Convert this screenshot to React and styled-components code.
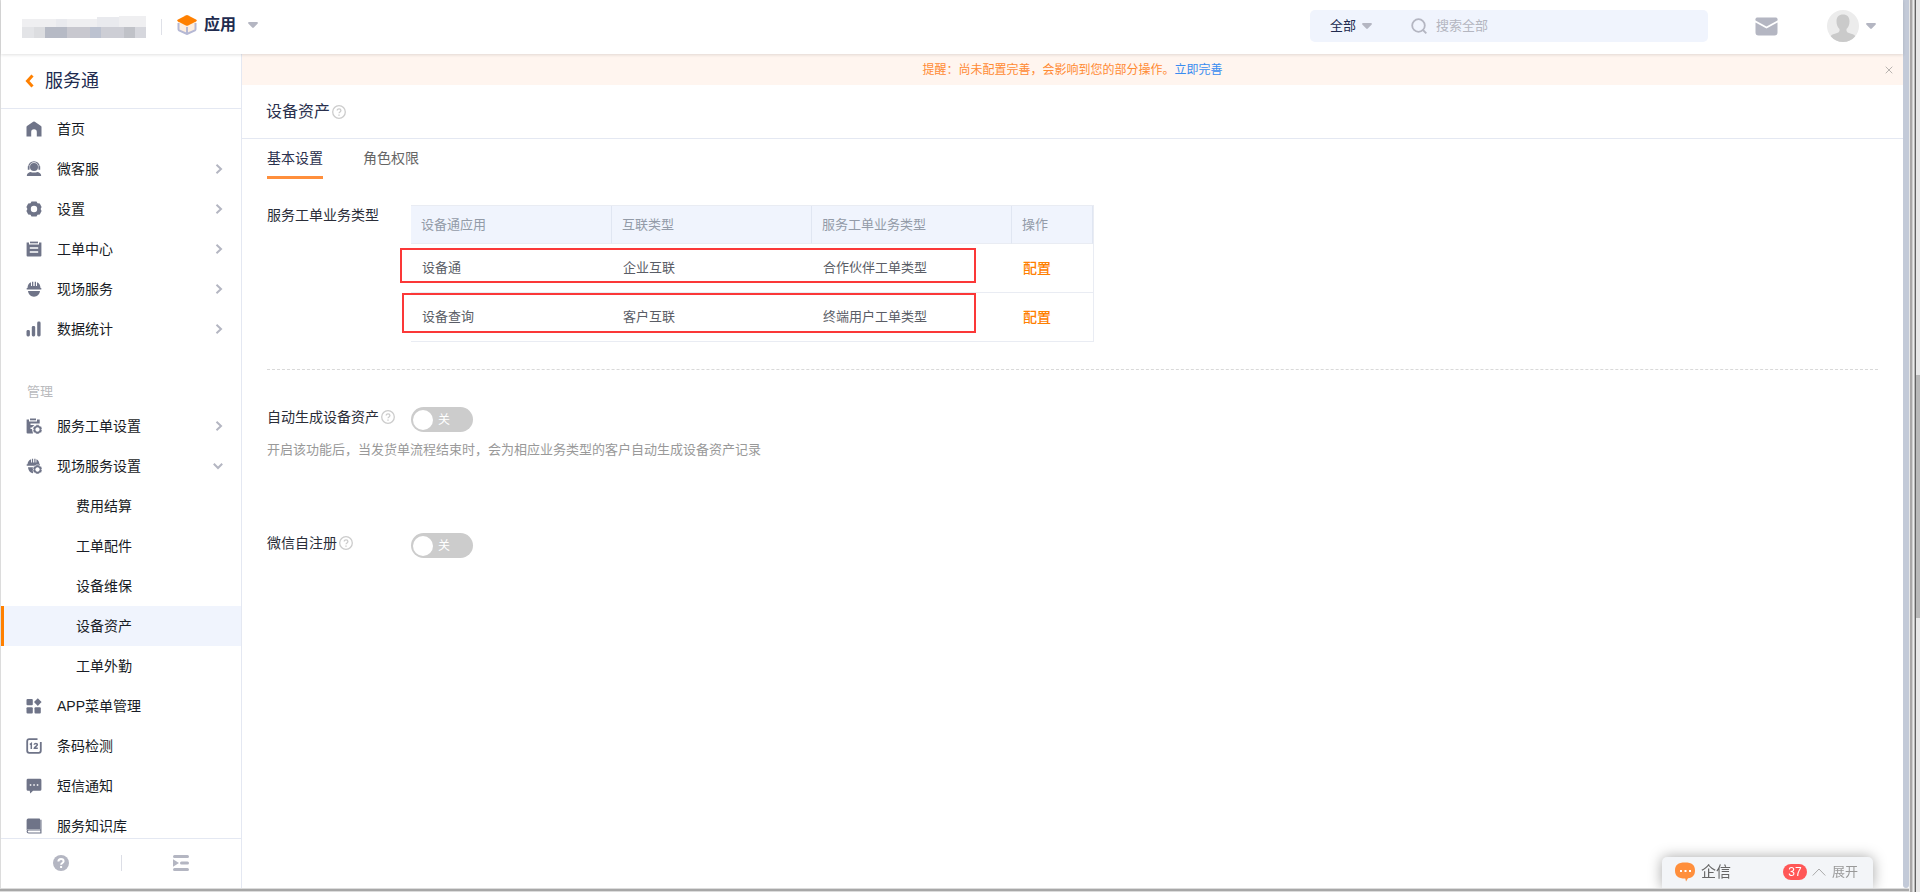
import React, { useState } from "react";
import styled, { createGlobalStyle } from "styled-components";

const FONT = '"Liberation Sans", "Noto Sans CJK SC", sans-serif';
const ORANGE = "#ff8000";
const LINE = "#e4e8f2";
const SLATE = "#6f7488";
const MUTED = "#b4b6c2";

const GlobalStyle = createGlobalStyle`
  * { box-sizing: border-box; }
  body { margin: 0; background: #fff; color: #181c25; font: 14px/20px ${FONT}; }
  button, input, select { font: inherit; color: inherit; margin: 0; padding: 0; border: 0; background: none; outline: none; }
  button { cursor: pointer; }
  a { color: inherit; text-decoration: none; }
  ul { list-style: none; margin: 0; padding: 0; }
  svg { display: block; flex: none; }
`;

/* ---------- window frame ---------- */

const Window = styled.div`
  display: flex;
  height: 100vh;
  overflow: hidden;
`;

const Frame = styled.div`
  flex: 1;
  min-width: 0;
  display: flex;
  flex-direction: column;
`;

const Viewport = styled.div`
  flex: 1;
  min-height: 0;
  display: flex;
`;

const AppShell = styled.div`
  flex: 1;
  min-width: 0;
  display: flex;
  flex-direction: column;
  border-left: 1px solid #dcdcdc;
`;

const InnerScroll = styled.div`
  width: 6px;
  background: #c3cad8;
  border-radius: 0 0 3px 3px;
`;

const FrameBottom = styled.div`
  height: 4px;
  background: #a8a8a8;
  border-top: 1px solid #dcdcdc;
  border-bottom: 1px solid #dcdcdc;
`;

const FrameRight = styled.div`
  width: 7px;
  background: linear-gradient(to right, #e6e6e6 0 1px, #a9a7a7 1px 3px, #cfcfcf 3px 4px, #ececec 4px 5px, #b8b8b8 5px 6px, #626262 6px 7px);
`;

const OuterScroll = styled.div`
  width: 4px;
  display: grid;
  grid-template-rows: 375fr 243fr 274fr;
  background: #e8e8e8;
`;

const OuterThumb = styled.div`
  grid-row: 2;
  background: #b8b8b8;
`;

/* ---------- header ---------- */

const Header = styled.header`
  position: relative;
  z-index: 2;
  height: 54px;
  display: flex;
  align-items: center;
  padding: 0 27px 0 21px;
  background: #fff;
  box-shadow: 0 1px 3px rgba(0, 0, 0, 0.12);
`;

const HeaderSplit = styled.i`
  width: 1px;
  height: 16px;
  margin: 0 15px;
  background: #dfe1e8;
`;

const AppSwitch = styled.button`
  display: flex;
  align-items: center;
  margin-bottom: 4px;
  font-size: 16px;
  line-height: 24px;
  font-weight: 700;
  color: #212b4f;
  svg:first-child { margin-right: 7px; }
  svg:last-child { margin-left: 12px; }
`;

const SearchBar = styled.form`
  width: 398px;
  height: 32px;
  margin: 0 47px 2px auto;
  padding-left: 20px;
  display: flex;
  align-items: center;
  border-radius: 5px;
  background: #f0f4fd;
  font-size: 13px;
`;

const Scope = styled.label`
  display: flex;
  align-items: center;
  gap: 6px;
  margin-right: 39px;
  select { appearance: none; width: 26px; color: #212b4f; }
`;

const SearchInput = styled.input`
  flex: 1;
  margin-left: 9px;
  &::placeholder { color: #b4b6c0; opacity: 1; }
`;

const MailButton = styled.button`
  margin: 0 49px 2px 0;
`;

const UserButton = styled.button`
  display: flex;
  align-items: center;
  gap: 7px;
  margin-bottom: 2px;
`;

/* ---------- sidebar ---------- */

const Body = styled.div`
  flex: 1;
  min-height: 0;
  display: flex;
`;

const Sidebar = styled.aside`
  width: 241px;
  display: flex;
  flex-direction: column;
  border-right: 1px solid ${LINE};
`;

const SideTitle = styled.a`
  height: 55px;
  display: flex;
  align-items: center;
  gap: 11px;
  padding-left: 24px;
  border-bottom: 1px solid ${LINE};
  font-size: 18px;
  line-height: 26px;
  color: #212b4f;
`;

const Nav = styled.nav`
  flex: 1;
  min-height: 0;
  overflow: hidden;
`;

const NavLink = styled.a`
  height: 40px;
  display: flex;
  align-items: center;
  padding: 0 18px 0 ${(p) => (p.$sub ? 72 : 22)}px;
  border-left: 3px solid ${(p) => (p.$active ? ORANGE : "transparent")};
  background: ${(p) => (p.$active ? "#f0f4fd" : "transparent")};
  svg:first-child { margin-right: 15px; }
  span { flex: 1; }
`;

const NavGroup = styled.h2`
  height: 57px;
  margin: 0;
  padding: 33px 0 0 26px;
  font-size: 13px;
  font-weight: 400;
  color: #b9babd;
`;

const SideFooter = styled.div`
  height: 50px;
  display: flex;
  align-items: center;
  padding-bottom: 1px;
  border-top: 1px solid ${LINE};
  button { flex: 1; display: flex; justify-content: center; }
  i { width: 1px; height: 16px; background: #dcdee6; }
`;

/* ---------- main ---------- */

const Main = styled.main`
  flex: 1;
  min-width: 0;
`;

const Banner = styled.div`
  height: 31px;
  display: grid;
  grid-template-columns: 1fr auto 1fr;
  align-items: center;
  padding: 0 10px;
  background: #fff5ef;
  font-size: 12px;
  color: #ff8a33;
  p { grid-column: 2; margin: 0; }
  a { color: #3a8cf0; }
  button { justify-self: end; }
`;

const PageHead = styled.div`
  height: 54px;
  display: flex;
  align-items: center;
  gap: 2px;
  padding-left: 24px;
  border-bottom: 1px solid ${LINE};
  h1 { margin: 0; font-size: 16px; line-height: 24px; font-weight: 400; color: #2a304d; }
`;

const Content = styled.div`
  padding: 0 25px;
`;

const Tabs = styled.div`
  display: flex;
  gap: 40px;
`;

const Tab = styled.button`
  height: 40px;
  border-bottom: 3px solid ${(p) => (p.$active ? "#ff8f3c" : "transparent")};
  color: ${(p) => (p.$active ? "#2a304d" : "#666")};
`;

const TypeSection = styled.section`
  display: flex;
  padding: 26px 0 27px;
  border-bottom: 1px dashed #d9d9d9;
`;

const FieldLabel = styled.div`
  width: 144px;
  display: flex;
  align-items: center;
  gap: 2px;
  height: 20px;
  color: #2a2d38;
`;

const TableBox = styled.div`
  position: relative;
`;

const DataTable = styled.table`
  width: 683px;
  table-layout: fixed;
  border-collapse: separate;
  border-spacing: 0;
  border: 1px solid #e9ecf3;
  border-left: 0;
  font-size: 13px;
  th, td { padding: 0 0 0 11px; text-align: left; font-weight: 400; border-bottom: 1px solid #e9ecf3; }
  th { height: 38px; padding-left: 10px; color: #939ba8; background: #f0f4fd; border-right: 1px solid #e0e6f2; }
  td { height: 49px; color: #5a5d66; }
  tr:last-child td { height: 48px; border-bottom: 0; }
  td a { font-size: 14px; color: ${ORANGE}; font-weight: 500; }
`;

const Mark = styled.i`
  position: absolute;
  top: ${(p) => p.$top}px;
  left: ${(p) => p.$left}px;
  width: ${(p) => p.$width}px;
  height: ${(p) => p.$height}px;
  border: 2px solid #fb3838;
  pointer-events: none;
`;

const SwitchSection = styled.section`
  height: 126px;
  padding-top: 37px;
  p { margin: 8px 0 0; font-size: 13px; line-height: 20px; color: #999; }
`;

const SwitchRow = styled.div`
  display: flex;
`;

const Toggle = styled.label`
  width: 62px;
  height: 25px;
  display: flex;
  align-items: center;
  gap: 5px;
  padding: 0 2px;
  flex-direction: ${(p) => (p.$on ? "row-reverse" : "row")};
  border-radius: 13px;
  background: ${(p) => (p.$on ? ORANGE : "#ccc")};
  font-size: 12px;
  color: #fff;
  cursor: pointer;
  input { appearance: none; width: 20px; height: 20px; border-radius: 50%; background: #fff; cursor: pointer; }
`;

const ChatDock = styled.button`
  position: fixed;
  right: 47px;
  bottom: 4px;
  z-index: 3;
  width: 211px;
  height: 31px;
  padding: 0 15px 2px 13px;
  display: flex;
  align-items: center;
  border-radius: 5px 5px 0 0;
  background: #f3f5f8;
  box-shadow: 0 0 14px rgba(0, 0, 0, 0.35);
  font-size: 13px;
  color: #999;
  clip-path: inset(-20px -20px 0 -20px);
  strong { margin: 0 auto 0 6px; font-size: 15px; font-weight: 400; color: #666; }
  em { width: 24px; height: 16px; margin-right: 5px; border-radius: 8px; background: #ff5757; color: #fff; font-size: 12px; line-height: 16px; font-style: normal; text-align: center; }
  svg + span { margin-left: 6px; }
`;

/* ---------- icons ---------- */

const Caret = () => (
  <svg width="10" height="6" viewBox="0 0 10 6"><path d="M1.2 0h7.6c1 0 1.4 1 .7 1.7L5.8 5.5c-.5.5-1.1.5-1.6 0L.5 1.7C-.2 1 .2 0 1.2 0z" fill={MUTED} /></svg>
);

const HelpMark = () => (
  <svg width="14" height="14" viewBox="0 0 14 14" fill="none" stroke="#ccc">
    <circle cx="7" cy="7" r="6.300" strokeWidth="1.300" />
    <path d="M5.200 5.600c0-2.500 3.700-2.300 3.700-.1C8.900 6.900 7 6.900 7 8.300" strokeWidth="1.300" />
    <path d="M7 9.400v1.300" strokeWidth="1.400" />
  </svg>
);

const Chevron = ({ open }) => (
  <svg width={open ? 10 : 8} height={open ? 8 : 10} viewBox={open ? "0 0 10 8" : "0 0 8 10"} fill="none" stroke={MUTED} strokeWidth="2">
    <path d={open ? "M.8 1.800 5 6l4.200-4.200" : "M1.500.8 6 5 1.500 9.200"} />
  </svg>
);

const MINI_GEAR = "M10.200 6.800h2.600l.7 1.300 1.500.1 1.100 2.100-.8 1.200.8 1.200-1.100 2.100-1.500.1-.7 1.100h-2.600l-.7-1.100-1.500-.1-1.100-2.100.8-1.200-.8-1.200L8 8.200l1.500-.1zM11.500 9.600a1.900 1.900 0 1 0 0 3.800 1.900 1.900 0 0 0 0-3.800z";

const ICONS = {
  home: <path d="M7.200.7q.8-.5 1.600 0L15 5q.5.400.5 1v9.500H10.800V11a2.800 2.800 0 0 0-5.600 0v4.500H.5V6q0-.6.500-1z" />,
  service: (
    <>
      <circle cx="8" cy="6" r="4" />
      <path d="M2.700 7.500V6a5.300 5.300 0 0 1 10.600 0v1.500" fill="none" stroke={SLATE} strokeWidth="1.100" />
      <path d="M1.800 5.300h1.700v3.400H1.800zM12.500 5.300h1.700v3.400h-1.700z" />
      <path d="M1.500 15c-.6 0-.8-.5-.6-1 .5-1.700 2-2.700 4-3 .8.800 5.400.8 6.200 0 2 .3 3.500 1.300 4 3 .2.500 0 1-.6 1z" />
    </>
  ),
  gear: (
    <path fillRule="evenodd" d="M5.500.5h5l1 1.800 2.300.1L15.600 6l-1 2 1 2-1.800 3.600-2.300.1-1 1.800h-5l-1-1.800-2.300-.1L.4 10l1-2-1-2 1.800-3.600 2.300-.1zM8 4.800a3.200 3.200 0 1 0 0 6.400 3.200 3.200 0 0 0 0-6.400z" />
  ),
  clipboard: (
    <>
      <path d="M.6 1.500H3v2h10v-2h2.400V14.500q0 1-1 1H1.600q-1 0-1-1z" />
      <path d="M4 .6h8v1.700H4z" />
      <path d="M3.800 7h8.400M3.800 11h8.400" stroke="#fff" strokeWidth="1.500" />
    </>
  ),
  helmet: (
    <>
      <path d="M1.500 7C1.600 4 3 2 5 1.300V5h1V.7h1.300V5h1.400V.7H10V5h1V1.300C13 2 14.400 4 14.500 7z" />
      <path d="M.7 7h14.600v1.600H.7zM2 10h12c-.4 3.400-2.700 5.700-6 5.700S2.400 13.400 2 10z" />
    </>
  ),
  bars: (
    <>
      <rect x=".5" y="9" width="3.400" height="6.500" rx="1.400" />
      <rect x="5.800" y="5" width="3.400" height="10.500" rx="1.400" />
      <rect x="11.200" y=".6" width="3.400" height="14.900" rx="1.400" />
    </>
  ),
  clipGear: (
    <>
      <path d="M.6 1.500H3v2h8v-2h2.700V5.500H4.500V7h4L7 8.200 6 9.500H4.500V11H6l1 4.500H1.600q-1 0-1-1z" />
      <path d="M4 .5h6v1.800H4z" />
      <path d={MINI_GEAR} fillRule="evenodd" stroke="#fff" strokeWidth=".5" />
    </>
  ),
  helmetGear: (
    <>
      <path d="M1.500 6.500C1.600 4 3 2 5 1.300V4.500h.9V.7h1.200v3.800h1.200V.7h1.200v3.800h.9V1.300C12.400 2 13.300 4 13.500 6.500zM.7 6.300h13.200v1.500H.7zM2 9.300h5v6C4 15 2.200 12 2 9.300z" />
      <path d={MINI_GEAR} fillRule="evenodd" stroke="#fff" strokeWidth=".5" />
      <circle cx="11.500" cy="11.500" r="1.700" fill="#fff" />
    </>
  ),
  grid: (
    <>
      <rect x=".5" y="1" width="6.300" height="6.300" rx="1" />
      <path d="M11.800.3l3.800 3.800-3.800 3.800L8 4.100z" />
      <rect x=".5" y="9.200" width="6.300" height="6.300" rx="1" />
      <rect x="8.500" y="9.200" width="6.300" height="6.300" rx="1" />
    </>
  ),
  code: (
    <g fill="none" stroke={SLATE}>
      <path d="M11.500 1.200H3.200q-2 0-2 2v9.600q0 2 2 2h9.600q2 0 2-2V4" strokeWidth="1.800" />
      <path d="M3.800 6.500 5.300 5.500v5.500M8.200 6.700c0-1.600 3.200-1.600 3.200.1 0 1-3 2.200-3.100 3.500h3.500" strokeWidth="1.500" />
    </g>
  ),
  message: (
    <>
      <path d="M2 .8h12q1.400 0 1.400 1.400v9.200q0 1.400-1.400 1.400H7L4.300 15.400 3.700 12.800H2Q.6 12.800.6 11.400V2.200Q.6.8 2 .8z" />
      <path d="M3.800 6.200h1.500v1.500H3.800zM7.300 6.200h1.500v1.500H7.300zM10.800 6.200h1.500v1.500h-1.500z" fill="#fff" />
    </>
  ),
  book: (
    <>
      <path d="M2.300.6h11q.8 0 .8.8v9.800H3Q1.500 11.200.6 12.300V2.300Q.6.6 2.300.6z" />
      <path d="M14.900 1.800v13.200H2.800c-2.200 0-2.200-3 0-3h12" fill="none" stroke={SLATE} strokeWidth="1.200" />
    </>
  ),
};

const NavIcon = ({ name }) => (
  <svg width="16" height="16" viewBox="0 0 16 16" fill={SLATE}>{ICONS[name]}</svg>
);

const CompanyMark = () => (
  <svg width="124" height="22" viewBox="0 0 124 22" shapeRendering="crispEdges">
    <path d="M0 3h75V1h22V0h27v11H0z" fill="#efeff1" />
    <path d="M34 3h11v8H34zM75 1h22v10H75z" fill="#e9eaee" />
    <path d="M0 11h12v11H0z" fill="#e3e4e7" />
    <path d="M12 11h11v11H12z" fill="#dcdde0" />
    <path d="M23 11h22v11H23z" fill="#b6bac5" />
    <path d="M45 11h23v11H45z" fill="#c8c8cf" />
    <path d="M68 11h11v11H68z" fill="#bcc2d0" />
    <path d="M79 11h23v11H79z" fill="#cdced5" />
    <path d="M102 11h11v11h-11z" fill="#c0c2c8" />
    <path d="M113 11h11v11h-11z" fill="#d6d7dd" />
  </svg>
);

const CubeLogo = () => (
  <svg width="20" height="20" viewBox="0 0 20 20">
    <path d="M1 6.500 10 11l9-4.500V15l-9 4.500L1 15z" fill="#fdeee0" />
    <path d="M1.500 8v6.300q0 .6.600 1L10 19l7.900-3.700q.6-.4.600-1V8M10 12v7" fill="none" stroke="#b5b8d4" strokeWidth="2" />
    <path d="M9.300.2q.7-.3 1.400 0l8.300 4.200q1.600 1.100 0 2.200l-8.300 4.100q-.7.300-1.400 0L1 6.600q-1.600-1.100 0-2.200z" fill={ORANGE} />
  </svg>
);

const SearchIcon = () => (
  <svg width="16" height="16" viewBox="0 0 16 16" fill="none" stroke={MUTED} strokeWidth="1.800">
    <circle cx="7.500" cy="7.500" r="6.300" />
    <path d="m12 12 3.300 3.300" />
  </svg>
);

const MailIcon = () => (
  <svg width="23" height="19" viewBox="0 0 23 19" fill={MUTED}>
    <path d="M2 .5h19q1.500 0 1.500 1.700v1.300L11.500 9.500.5 3.500V2.200Q.5.500 2 .5z" />
    <path d="M.5 5.500l11 6 11-6v10q0 3-3 3h-16q-3 0-3-3z" />
  </svg>
);

const Avatar = () => (
  <svg width="32" height="32" viewBox="0 0 32 32">
    <circle cx="16" cy="16" r="16" fill="#ececec" />
    <path d="M16 4.500c4.200 0 6.500 2.700 6.500 6.800 0 3.500-1 6-3 7.700-.3 2.300.3 3.300 2.500 4 3 .9 5.200 1.500 6.300 3.200A16 16 0 0 1 16 32 16 16 0 0 1 3.700 26.200C4.800 24.500 7 23.900 10 23c2.200-.7 2.800-1.700 2.500-4-2-1.700-3-4.200-3-7.700 0-4.100 2.300-6.800 6.500-6.800z" fill="#cacaca" />
  </svg>
);

const BackIcon = () => (
  <svg width="9" height="14" viewBox="0 0 9 14" fill="none" stroke={ORANGE} strokeWidth="3"><path d="M7.500 1.500 2.500 7l5 5.500" /></svg>
);

const CloseIcon = () => (
  <svg width="8" height="8" viewBox="0 0 8 8" fill="none" stroke="#b9b4b0"><path d="m.7.700 6.600 6.600M7.300.700.7 7.300" /></svg>
);

const HelpSolid = () => (
  <svg width="16" height="16" viewBox="0 0 16 16" fill="none" stroke="#fff">
    <circle cx="8" cy="8" r="8" fill={MUTED} stroke="none" />
    <path d="M5.400 6.400c0-3.400 5.200-3.200 5.200-.2C10.600 8 8.100 8 8.100 9.800" strokeWidth="2" />
    <path d="M8.100 11v2" strokeWidth="2" />
  </svg>
);

const FoldIcon = () => (
  <svg width="16" height="16" viewBox="0 0 16 16" fill="none" stroke={MUTED} strokeWidth="3" strokeLinecap="round">
    <path d="M1.500 1.500h13M8.500 8h6M1.500 14.500h13" />
    <path d="M0 4.300 6 8 0 11.700z" fill={MUTED} stroke="none" />
  </svg>
);

const ChatIcon = () => (
  <svg width="20" height="20" viewBox="0 0 20 20">
    <path d="M10 .5C17 .5 20 3 20 8.500c0 4.500-2 7-7 7.800L11 19.500 10.300 16.500C3 16.500 0 14 0 8.500S3 .5 10 .5z" fill="#ff8f3c" />
    <path d="M5 8h2v2H5zM9.500 8h2v2h-2zM14 8h2v2h-2z" fill="#fff" />
  </svg>
);

/* ---------- data ---------- */

const MENU = [
  { icon: "home", label: "首页" },
  { icon: "service", label: "微客服", more: true },
  { icon: "gear", label: "设置", more: true },
  { icon: "clipboard", label: "工单中心", more: true },
  { icon: "helmet", label: "现场服务", more: true },
  { icon: "bars", label: "数据统计", more: true },
];

const ADMIN = [
  { icon: "clipGear", label: "服务工单设置", more: true },
  { icon: "helmetGear", label: "现场服务设置", more: true, open: true },
  { label: "费用结算" },
  { label: "工单配件" },
  { label: "设备维保" },
  { label: "设备资产", active: true },
  { label: "工单外勤" },
  { icon: "grid", label: "APP菜单管理" },
  { icon: "code", label: "条码检测" },
  { icon: "message", label: "短信通知" },
  { icon: "book", label: "服务知识库" },
];

const ROWS = [
  ["设备通", "企业互联", "合作伙伴工单类型"],
  ["设备查询", "客户互联", "终端用户工单类型"],
];

const NavList = ({ items }) => (
  <ul>
    {items.map((it) => (
      <li key={it.label}>
        <NavLink href="#" $sub={!it.icon} $active={it.active}>
          {it.icon && <NavIcon name={it.icon} />}
          <span>{it.label}</span>
          {it.more && <Chevron open={it.open} />}
        </NavLink>
      </li>
    ))}
  </ul>
);

const SwitchField = ({ label, hint }) => {
  const [on, setOn] = useState(false);
  return (
    <SwitchSection>
      <SwitchRow>
        <FieldLabel>{label}<HelpMark /></FieldLabel>
        <Toggle $on={on}>
          <input type="checkbox" role="switch" aria-label={label} checked={on} onChange={() => setOn(!on)} />
          {on ? "开" : "关"}
        </Toggle>
      </SwitchRow>
      {hint && <p>{hint}</p>}
    </SwitchSection>
  );
};

export default function App() {
  const [tab, setTab] = useState(0);
  return (
    <Window>
      <GlobalStyle />
      <Frame>
        <Viewport>
          <AppShell>
            <Header>
              <CompanyMark />
              <HeaderSplit />
              <AppSwitch type="button"><CubeLogo />应用<Caret /></AppSwitch>
              <SearchBar onSubmit={(e) => e.preventDefault()}>
                <Scope>
                  <select aria-label="全部"><option>全部</option></select>
                  <Caret />
                </Scope>
                <SearchIcon />
                <SearchInput type="text" aria-label="搜索全部" placeholder="搜索全部" />
              </SearchBar>
              <MailButton type="button" aria-label="消息"><MailIcon /></MailButton>
              <UserButton type="button" aria-label="用户"><Avatar /><Caret /></UserButton>
            </Header>
            <Body>
              <Sidebar>
                <SideTitle href="#"><BackIcon />服务通</SideTitle>
                <Nav>
                  <NavList items={MENU} />
                  <NavGroup>管理</NavGroup>
                  <NavList items={ADMIN} />
                </Nav>
                <SideFooter>
                  <button type="button" aria-label="帮助"><HelpSolid /></button>
                  <i />
                  <button type="button" aria-label="收起"><FoldIcon /></button>
                </SideFooter>
              </Sidebar>
              <Main>
                <Banner>
                  <p>提醒：尚未配置完善，会影响到您的部分操作。<a href="#">立即完善</a></p>
                  <button type="button" aria-label="关闭"><CloseIcon /></button>
                </Banner>
                <PageHead><h1>设备资产</h1><HelpMark /></PageHead>
                <Content>
                  <Tabs role="tablist">
                    {["基本设置", "角色权限"].map((name, i) => (
                      <Tab key={name} type="button" role="tab" aria-selected={tab === i} $active={tab === i} onClick={() => setTab(i)}>{name}</Tab>
                    ))}
                  </Tabs>
                  <TypeSection>
                    <FieldLabel>服务工单业务类型</FieldLabel>
                    <TableBox>
                      <DataTable>
                        <colgroup><col width="201" /><col width="200" /><col width="200" /><col /></colgroup>
                        <thead>
                          <tr><th>设备通应用</th><th>互联类型</th><th>服务工单业务类型</th><th>操作</th></tr>
                        </thead>
                        <tbody>
                          {ROWS.map((row) => (
                            <tr key={row[0]}>
                              {row.map((cell) => <td key={cell}>{cell}</td>)}
                              <td><a href="#">配置</a></td>
                            </tr>
                          ))}
                        </tbody>
                      </DataTable>
                      <Mark $top={43} $left={-11} $width={576} $height={35} />
                      <Mark $top={88} $left={-9} $width={574} $height={40} />
                    </TableBox>
                  </TypeSection>
                  <SwitchField label="自动生成设备资产" hint="开启该功能后，当发货单流程结束时，会为相应业务类型的客户自动生成设备资产记录" />
                  <SwitchField label="微信自注册" />
                </Content>
              </Main>
            </Body>
          </AppShell>
          <InnerScroll />
        </Viewport>
        <FrameBottom />
      </Frame>
      <FrameRight />
      <OuterScroll><OuterThumb /></OuterScroll>
      <ChatDock type="button">
        <ChatIcon />
        <strong>企信</strong>
        <em>37</em>
        <svg width="14" height="8" viewBox="0 0 14 8" fill="none" stroke="#aaa"><path d="m.7 7.500 6.300-6.500 6.300 6.500" /></svg>
        <span>展开</span>
      </ChatDock>
    </Window>
  );
}
